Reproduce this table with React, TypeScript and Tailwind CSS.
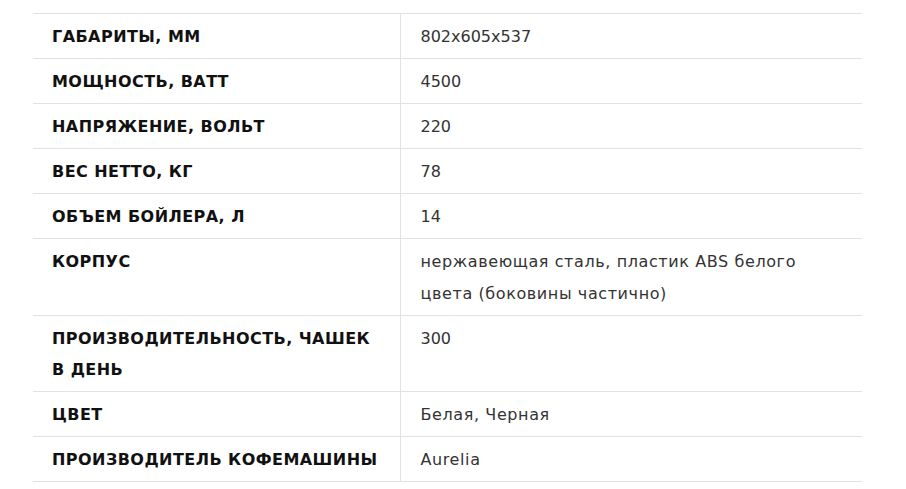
import React from "react";

const rows: { label: React.ReactNode; value: React.ReactNode; num?: boolean }[] = [
  { label: "ГАБАРИТЫ, ММ", value: "802x605x537", num: true },
  { label: "МОЩНОСТЬ, ВАТТ", value: "4500", num: true },
  { label: "НАПРЯЖЕНИЕ, ВОЛЬТ", value: "220", num: true },
  { label: "ВЕС НЕТТО, КГ", value: "78", num: true },
  { label: "ОБЪЕМ БОЙЛЕРА, Л", value: "14", num: true },
  {
    label: "КОРПУС",
    value: (
      <>
        нержавеющая сталь, пластик ABS белого
        <br />
        цвета (боковины частично)
      </>
    ),
  },
  {
    label: (
      <>
        ПРОИЗВОДИТЕЛЬНОСТЬ, ЧАШЕК
        <br />
        В ДЕНЬ
      </>
    ),
    value: "300",
    num: true,
  },
  { label: "ЦВЕТ", value: "Белая, Черная" },
  { label: "ПРОИЗВОДИТЕЛЬ КОФЕМАШИНЫ", value: "Aurelia" },
];

export default function App() {
  return (
    <div
      className="min-h-[489px] w-[906px] bg-white pl-[33px] pt-[13px]"
      style={{ fontFamily: "'DejaVu Sans', sans-serif" }}
    >
      <table className="w-[829px] border-collapse border-t border-[#e2e2e2]">
        <tbody>
          {rows.map((r, i) => (
            <tr key={i} className="border-b border-[#e2e2e2]">
              <td className="w-[367px] border-r border-[#e2e2e2] pt-[7px] pb-[5.5px] pl-[19px] pr-2 align-top text-[16px] font-bold leading-[31.5px] tracking-[0.45px] text-[#111111]">
                {r.label}
              </td>
              <td
                className={
                  r.num
                    ? "pt-[7px] pb-[5.5px] pl-[20px] pr-2 align-top text-[16px] leading-[31.5px] text-[#333333]"
                    : "pt-[7px] pb-[5.5px] pl-[20px] pr-2 align-top text-[16px] leading-[31.5px] tracking-[0.6px] text-[#333333]"
                }
              >
                {r.value}
              </td>
            </tr>
          ))}
        </tbody>
      </table>
    </div>
  );
}
